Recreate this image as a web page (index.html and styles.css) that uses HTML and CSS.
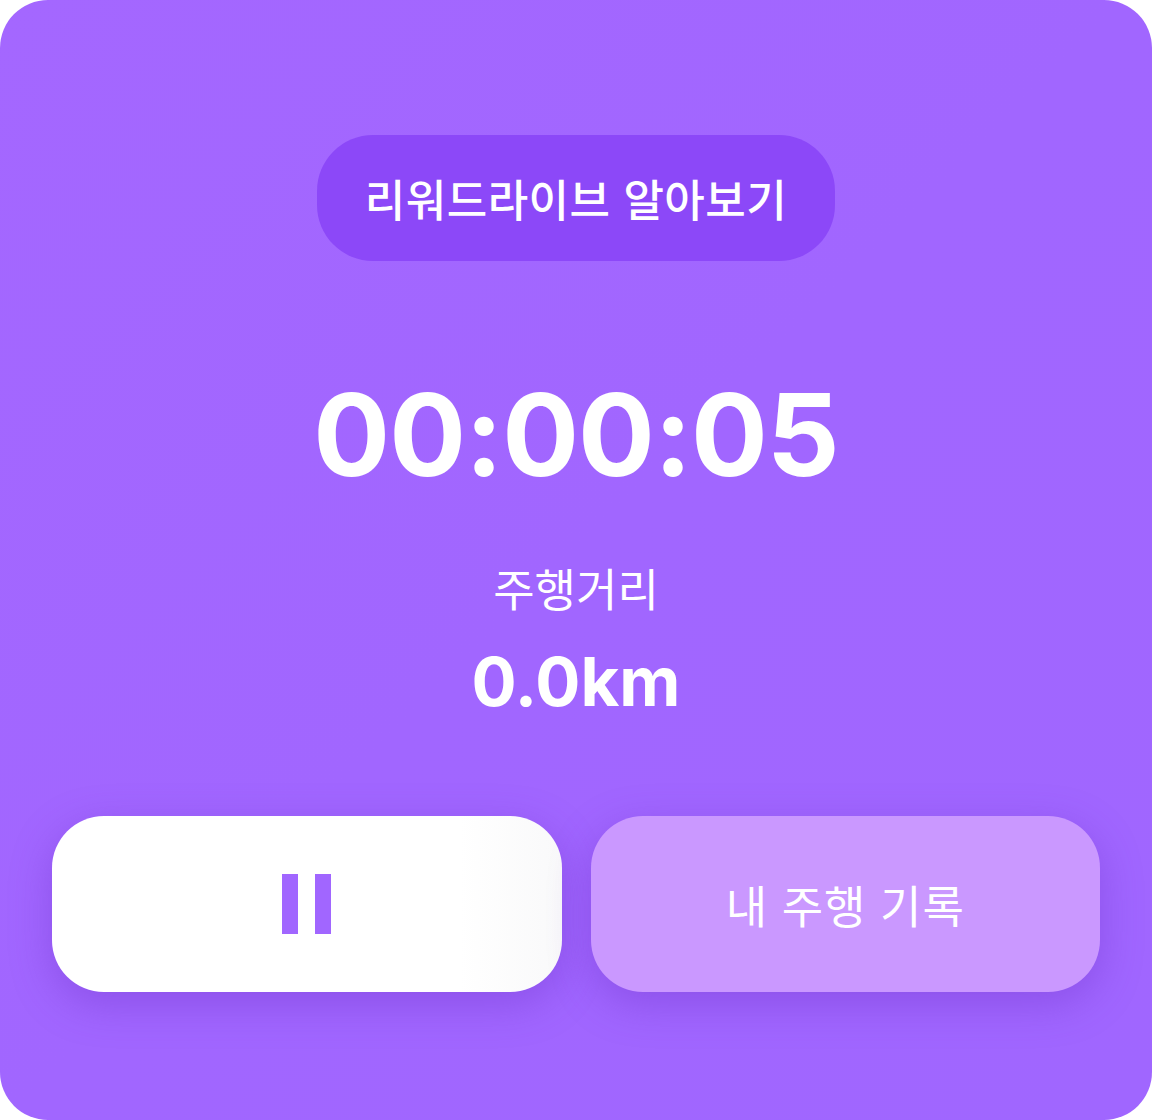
FILE: index.html
```html
<!DOCTYPE html>
<html lang="ko">
<head>
<meta charset="utf-8">
<link rel="stylesheet" href="styles.css">
</head>
<body>
<div class="card">
  <div class="pill">리워드라이브 알아보기</div>
  <div class="timer">00:00:05</div>
  <div class="dist-label">주행거리</div>
  <div class="dist-value">0.0km</div>
  <div class="actions">
    <button class="btn btn-pause" aria-label="일시정지">
      <span class="bar"></span><span class="bar"></span>
    </button>
    <button class="btn btn-history">내 주행 기록</button>
  </div>
</div>
</body>
</html>
```
FILE: styles.css
```css
html, body { margin: 0; padding: 0; background: #ffffff; }
body { width: 1152px; height: 1120px; }
.card {
  box-sizing: border-box;
  width: 1152px;
  height: 1120px;
  border-radius: 48px;
  background: linear-gradient(135deg, #a467ff 0%, #a166ff 50%, #a066ff 100%);
  display: flex;
  flex-direction: column;
  align-items: center;
  padding: 135px 52px 0;
  font-family: "Noto Sans CJK KR", "Noto Sans", sans-serif;
  color: #ffffff;
}
.pill {
  box-sizing: border-box;
  width: 518px;
  height: 126px;
  border-radius: 56px;
  background: #8c48f8;
  display: flex;
  align-items: center;
  justify-content: center;
  font-size: 44px;
  font-weight: 500;
  letter-spacing: 0.5px;
}
.timer {
  margin-top: 104px;
  font-family: Inter, "Liberation Sans", sans-serif;
  font-weight: 700;
  font-size: 114px;
  line-height: 140px;
  letter-spacing: -1px;
}
.dist-label {
  margin-top: 53px;
  font-size: 45px;
  font-weight: 400;
  line-height: 60px;
}
.dist-value {
  margin-top: 24px;
  font-family: Inter, "Liberation Sans", sans-serif;
  font-weight: 700;
  font-size: 67px;
  line-height: 80px;
}
.actions {
  margin-top: 94px;
  align-self: stretch;
  display: flex;
  gap: 29px;
}
.btn {
  flex: 1;
  height: 176px;
  border: 0;
  border-radius: 52px;
  display: flex;
  align-items: center;
  justify-content: center;
  box-shadow: 0 12px 40px rgba(110, 50, 200, 0.4);
  font-family: "Noto Sans CJK KR", "Noto Sans", sans-serif;
  padding: 0;
}
.btn-pause {
  background: linear-gradient(90deg, #ffffff 0%, #ffffff 80%, #f9f9fa 100%);
  gap: 17px;
}
.bar {
  display: block;
  width: 16px;
  height: 60px;
  background: #a166ff;
}
.btn-history {
  background: #ca98ff;
  color: #ffffff;
  font-size: 45px;
  font-weight: 400;
  letter-spacing: 1px;
}
```
